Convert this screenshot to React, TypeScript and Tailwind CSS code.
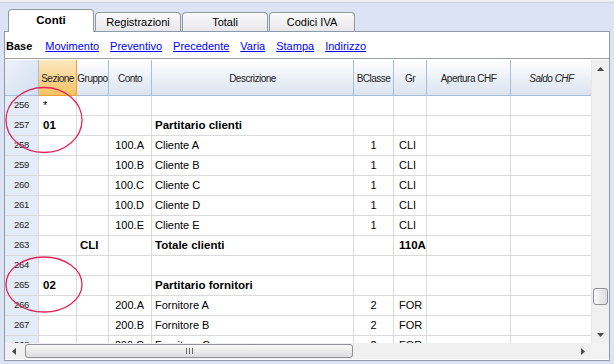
import React from "react";

type Row = {
  n: number;
  sez?: string;
  grp?: string;
  conto?: string;
  desc?: string;
  bc?: string;
  gr?: string;
  bold?: boolean;
};

const rows: Row[] = [
  { n: 256, sez: "*" },
  { n: 257, sez: "01", desc: "Partitario clienti", bold: true },
  { n: 258, conto: "100.A", desc: "Cliente A", bc: "1", gr: "CLI" },
  { n: 259, conto: "100.B", desc: "Cliente B", bc: "1", gr: "CLI" },
  { n: 260, conto: "100.C", desc: "Cliente C", bc: "1", gr: "CLI" },
  { n: 261, conto: "100.D", desc: "Cliente D", bc: "1", gr: "CLI" },
  { n: 262, conto: "100.E", desc: "Cliente E", bc: "1", gr: "CLI" },
  { n: 263, grp: "CLI", desc: "Totale clienti", gr: "110A", bold: true },
  { n: 264 },
  { n: 265, sez: "02", desc: "Partitario fornitori", bold: true },
  { n: 266, conto: "200.A", desc: "Fornitore A", bc: "2", gr: "FOR" },
  { n: 267, conto: "200.B", desc: "Fornitore B", bc: "2", gr: "FOR" },
  { n: 268, conto: "200.C", desc: "Fornitore C", bc: "2", gr: "FOR" },
];

const tabs = ["Conti", "Registrazioni", "Totali", "Codici IVA"];
const links = ["Movimento", "Preventivo", "Precedente", "Varia", "Stampa", "Indirizzo"];

const cols = "grid grid-cols-[34px_38px_32px_43px_202px_40px_33px_84px_82px]";
const cell = "border-r border-b border-[#dadada] flex items-center overflow-hidden whitespace-nowrap";
const hcell =
  "border-r border-b border-[#a9bed6] bg-gradient-to-b from-white to-[#dae3ef] flex items-center justify-center pt-[2px] text-[10px] tracking-[-0.5px] text-[#222]";

const Arrow = ({ dir }: { dir: "up" | "down" | "left" | "right" }) => {
  const pts = {
    up: "0,4 7,4 3.5,0",
    down: "0,0 7,0 3.5,4",
    left: "4,0 4,7 0,3.5",
    right: "0,0 0,7 4,3.5",
  }[dir];
  const w = dir === "up" || dir === "down" ? 7 : 4;
  const h = dir === "up" || dir === "down" ? 4 : 7;
  return (
    <svg width={w} height={h} viewBox={`0 0 ${w} ${h}`}>
      <polygon points={pts} fill="#4a4a4a" />
    </svg>
  );
};

export default function App() {
  return (
    <div className="relative w-[614px] h-[364px] overflow-hidden bg-[#dce3f5] font-['Liberation_Sans',Arial,sans-serif] text-black">
      <div className="h-[3px] bg-[#eef0f6] border-b border-[#c9d1e3]" />
      {/* tabs */}
      <div className="flex items-end h-[28px] pl-[8px] gap-[1px]">
        {tabs.map((t, i) =>
          i === 0 ? (
            <div
              key={t}
              className="relative z-10 mb-[-1px] h-[23px] w-[86px] bg-white border border-b-0 border-[#919b9c] rounded-t-[4px] flex items-center justify-center text-[11.5px] font-bold"
            >
              {t}
            </div>
          ) : (
            <div
              key={t}
              className="h-[19px] w-[86px] bg-gradient-to-b from-[#fafafb] to-[#e8e8ec] border border-b-0 border-[#919b9c] rounded-t-[4px] flex items-center justify-center text-[11px] pt-[1px]"
            >
              {t}
            </div>
          )
        )}
      </div>
      {/* panel */}
      <div className="mx-[4px] h-[330px] bg-white border border-[#8f99a8] flex flex-col">
        <div className="h-[26px] flex items-center pt-[3px] pl-[1px] text-[11px] gap-[11px]">
          <span className="font-bold mr-[2px]">Base</span>
          {links.map((l) => (
            <span key={l} className="text-[#0000ff] underline">
              {l}
            </span>
          ))}
        </div>
        <div className="h-[1px] bg-[#a0a0a0]" />
        <div className="h-[1px]" />
        <div className="flex h-[283px]">
          {/* grid */}
          <div className="w-[588px] overflow-hidden">
            <div className={`${cols} h-[36px]`}>
              <div className="border-r border-b border-[#a9bed6] bg-gradient-to-br from-[#edf2fa] to-[#d3dff0]" />
              <div className="border-r border-b border-[#f0a030] bg-gradient-to-b from-[#fde8bd] to-[#f6c160] flex items-center justify-center pt-[2px] text-[10px] tracking-[-0.5px] text-[#222]">
                Sezione
              </div>
              <div className={hcell}>Gruppo</div>
              <div className={hcell}>Conto</div>
              <div className={hcell}>Descrizione</div>
              <div className={hcell}>BClasse</div>
              <div className={hcell}>Gr</div>
              <div className={hcell}>Apertura CHF</div>
              <div className={`${hcell} italic`}>Saldo CHF</div>
            </div>
            {rows.map((r) => {
              const b = r.bold ? "font-bold text-[11.5px]" : "text-[11px]";
              return (
                <div key={r.n} className={`${cols} h-[20px]`}>
                  <div className={`${cell} bg-[#e4ecf7] justify-center text-[9.5px] tracking-[-0.3px] text-[#222]`}>
                    {r.n}
                  </div>
                  <div className={`${cell} pl-[4px] ${b}`}>{r.sez}</div>
                  <div className={`${cell} pl-[3px] ${b}`}>{r.grp}</div>
                  <div className={`${cell} justify-end pr-[7px] text-[11px]`}>{r.conto}</div>
                  <div className={`${cell} pl-[3px] ${b}`}>{r.desc}</div>
                  <div className={`${cell} justify-center text-[11px]`}>{r.bc}</div>
                  <div className={`${cell} pl-[5px] ${b}`}>{r.gr}</div>
                  <div className={cell} />
                  <div className={cell} />
                </div>
              );
            })}
          </div>
          {/* vertical scrollbar */}
          <div className="w-[18px] bg-[#f0f0f0] border-l border-[#e8e8e8] flex flex-col items-center">
            <div className="h-[17px] w-full flex items-center justify-center">
              <Arrow dir="up" />
            </div>
            <div className="flex-1 w-full px-[1px]">
              <div className="mt-[211px] h-[17px] rounded-[3px] border border-[#8e9096] bg-gradient-to-r from-[#fafafa] to-[#dcdcdc]" />
            </div>
            <div className="h-[17px] w-full flex items-center justify-center">
              <Arrow dir="down" />
            </div>
          </div>
        </div>
        {/* horizontal scrollbar */}
        <div className="h-[16px] flex bg-[#f0f0f0]">
          <div className="w-[17px] flex items-center justify-center">
            <Arrow dir="left" />
          </div>
          <div className="flex-1 py-[1px]">
            <div className="ml-[3px] w-[328px] h-full rounded-[3px] border border-[#8e9096] bg-gradient-to-b from-[#fafafa] to-[#dcdcdc] flex items-center justify-center gap-[2px]">
              <div className="w-[1px] h-[6px] bg-[#6b6b6b]" />
              <div className="w-[1px] h-[6px] bg-[#6b6b6b]" />
              <div className="w-[1px] h-[6px] bg-[#6b6b6b]" />
            </div>
          </div>
          <div className="w-[17px] flex items-center justify-center">
            <Arrow dir="right" />
          </div>
          <div className="w-[18px] bg-[#f3f3f3]" />
        </div>
        <div className="h-[1px]" />
      </div>
      {/* red annotation circles */}
      <svg className="absolute left-0 top-0 pointer-events-none" width="614" height="364">
        <ellipse cx="44" cy="120" rx="38" ry="32.5" fill="none" stroke="#e3265a" strokeWidth="1.3" />
        <ellipse cx="44" cy="284.5" rx="38" ry="27.5" fill="none" stroke="#e3265a" strokeWidth="1.3" />
      </svg>
    </div>
  );
}
